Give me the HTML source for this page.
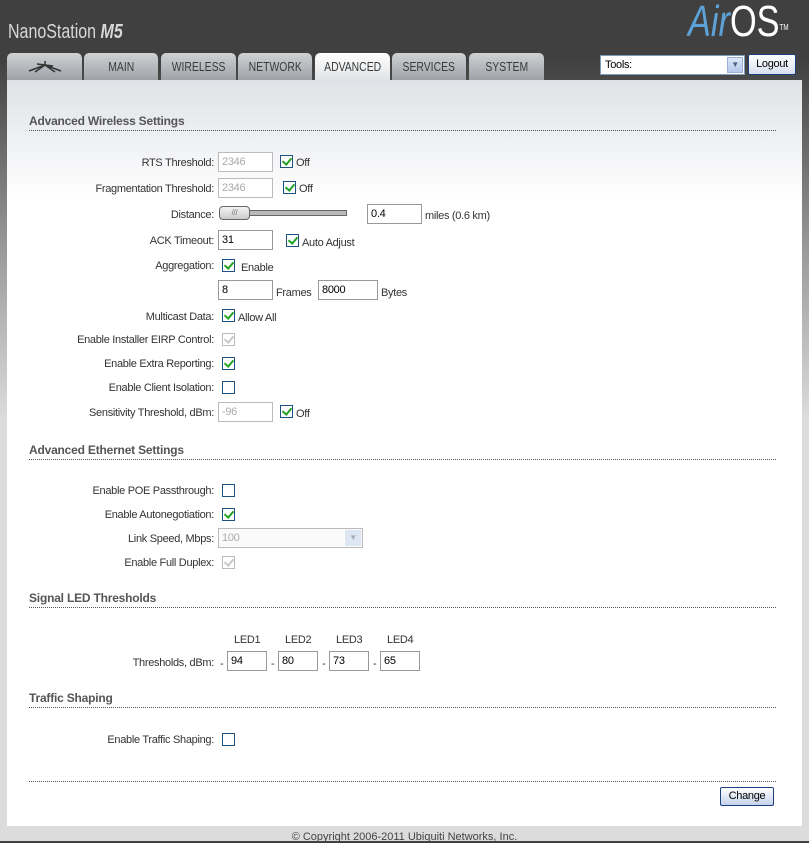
<!DOCTYPE html>
<html><head><meta charset="utf-8"><style>
*{margin:0;padding:0;box-sizing:border-box}
body{width:809px;height:841px;overflow:hidden;position:relative;font-family:"Liberation Sans",Arial,sans-serif;font-size:11px;letter-spacing:-0.3px;color:#333;background:linear-gradient(#404040 0px,#404040 60px,#9a9a9a 250px,#dcdcdc 420px,#dcdcdc 841px)}
.a{position:absolute;white-space:nowrap}
.tab{position:absolute;top:53px;height:27px;border-radius:5px 5px 0 0;background:linear-gradient(#cfd1d4,#9ea2a7);color:#3a3a3a;font-size:13px;text-align:center;line-height:28px;letter-spacing:0}
.tab span{display:inline-block;transform:scaleX(0.8)}
.tab.on{background:linear-gradient(#fff,#dfe2e6);height:28px}
#box{position:absolute;left:7px;top:80px;width:795px;height:746px;background:linear-gradient(#dfe2e6 0px,#fff 120px)}
.h{position:absolute;left:29px;width:747px;font-size:12px;font-weight:bold;color:#555;border-bottom:1px dotted #555;padding-bottom:2px;letter-spacing:-0.2px}
.l{position:absolute;right:595px;text-align:right;white-space:nowrap}
.in{position:absolute;height:20px;border:1px solid #999;background:#fff;padding:3px 3px;font-size:11px;color:#000}
.in.d{color:#aaa;border-color:#bbb}
.cb{position:absolute;width:13px;height:13px;border:1px solid #1c5180;background:#fff}
.cb.k::after{content:"";position:absolute;left:3px;top:0px;width:4px;height:7px;border:solid #21a121;border-width:0 2px 2px 0;transform:rotate(40deg)}
.cb.g{border-color:#bbb}.cb.g::after{border-color:#c8c8c8}
</style></head><body>
<div class="a" style="left:8px;top:21px;font-size:20px;color:#d8d8d8;letter-spacing:0;transform:scaleX(0.8);transform-origin:left">NanoStation <b style="font-style:italic">M5</b></div>
<div class="a" style="left:688px;top:-2px;font-size:44px;line-height:48px;letter-spacing:0;transform:scaleX(0.78);transform-origin:left"><i style="color:#5da3d8">Air</i><span style="color:#fff">OS</span><sup style="font-size:8px;color:#fff;vertical-align:top;position:relative;top:6px">TM</sup></div>
<div class="tab" style="left:7px;width:75px"><svg width="40" height="14" viewBox="0 0 40 14" style="margin-top:7px"><path d="M4 11 L20 5 L36 11 M20 5 L20 1 M12 4 L28 6 M20 5 L10 12 M20 5 L30 12" stroke="#333" stroke-width="1.5" fill="none"/></svg></div>
<div class="tab" style="left:84px;width:74px"><span>MAIN</span></div>
<div class="tab" style="left:161px;width:75px"><span>WIRELESS</span></div>
<div class="tab" style="left:238px;width:74px"><span>NETWORK</span></div>
<div class="tab on" style="left:315px;width:75px"><span>ADVANCED</span></div>
<div class="tab" style="left:392px;width:74px"><span>SERVICES</span></div>
<div class="tab" style="left:469px;width:75px"><span>SYSTEM</span></div>
<div class="a" style="left:600px;top:55px;width:145px;height:20px;background:#fff;border:1px solid #7f9db9;padding:3px 4px;color:#000">Tools:<span style="position:absolute;right:1px;top:1px;width:16px;height:16px;background:linear-gradient(#dde7f7,#b5c9ea);border:1px solid #98b0d8;font-size:8px;text-align:center;line-height:14px;color:#4d6185">&#9660;</span></div>
<div class="a" style="left:748px;top:54px;width:48px;height:21px;border:1px solid #1c3f80;border-radius:2px;background:linear-gradient(#fff,#d6e0f0);text-align:center;line-height:19px;color:#000">Logout</div>
<div id="box"></div>

<div class="h" style="top:114px">Advanced Wireless Settings</div>
<div class="l" style="top:157px">RTS Threshold:</div><div class="in d" style="left:218px;top:152px;width:55px">2346</div><div class="cb k" style="left:280px;top:155px"></div><div class="a" style="left:296px;top:157px">Off</div>
<div class="l" style="top:183px">Fragmentation Threshold:</div><div class="in d" style="left:218px;top:178px;width:55px">2346</div><div class="cb k" style="left:283px;top:181px"></div><div class="a" style="left:299px;top:183px">Off</div>
<div class="l" style="top:209px">Distance:</div>
<div class="a" style="left:249px;top:210px;width:98px;height:6px;background:#bbb;border:1px solid #666"></div>
<div class="a" style="left:219px;top:206px;width:31px;height:14px;border:1px solid #666;border-radius:4px;background:linear-gradient(#f4f4f4,#ccc);font-size:8px;color:#777;text-align:center;line-height:12px">///</div>
<div class="in" style="left:367px;top:204px;width:55px">0.4</div><div class="a" style="left:425px;top:210px">miles (0.6 km)</div>
<div class="l" style="top:235px">ACK Timeout:</div><div class="in" style="left:218px;top:230px;width:55px">31</div><div class="cb k" style="left:286px;top:234px"></div><div class="a" style="left:302px;top:237px">Auto Adjust</div>
<div class="l" style="top:260px">Aggregation:</div><div class="cb k" style="left:222px;top:259px"></div><div class="a" style="left:241px;top:262px">Enable</div>
<div class="in" style="left:218px;top:280px;width:55px">8</div><div class="a" style="left:276px;top:287px">Frames</div><div class="in" style="left:318px;top:280px;width:60px">8000</div><div class="a" style="left:381px;top:287px">Bytes</div>
<div class="l" style="top:311px">Multicast Data:</div><div class="cb k" style="left:222px;top:309px"></div><div class="a" style="left:238px;top:312px">Allow All</div>
<div class="l" style="top:334px">Enable Installer EIRP Control:</div><div class="cb k g" style="left:222px;top:333px"></div>
<div class="l" style="top:358px">Enable Extra Reporting:</div><div class="cb k" style="left:222px;top:357px"></div>
<div class="l" style="top:382px">Enable Client Isolation:</div><div class="cb" style="left:222px;top:381px"></div>
<div class="l" style="top:407px">Sensitivity Threshold, dBm:</div><div class="in d" style="left:218px;top:402px;width:55px">-96</div><div class="cb k" style="left:280px;top:405px"></div><div class="a" style="left:296px;top:408px">Off</div>

<div class="h" style="top:443px">Advanced Ethernet Settings</div>
<div class="l" style="top:485px">Enable POE Passthrough:</div><div class="cb" style="left:222px;top:484px"></div>
<div class="l" style="top:509px">Enable Autonegotiation:</div><div class="cb k" style="left:222px;top:508px"></div>
<div class="l" style="top:533px">Link Speed, Mbps:</div><div class="in d" style="left:218px;top:528px;width:145px;background:#fafafa">100<span style="position:absolute;right:1px;top:1px;width:16px;height:16px;background:#dde6f3;color:#aab;font-size:8px;text-align:center;line-height:16px">&#9660;</span></div>
<div class="l" style="top:557px">Enable Full Duplex:</div><div class="cb k g" style="left:222px;top:556px"></div>

<div class="h" style="top:591px">Signal LED Thresholds</div>
<div class="a" style="left:234px;top:634px">LED1</div><div class="a" style="left:285px;top:634px">LED2</div><div class="a" style="left:336px;top:634px">LED3</div><div class="a" style="left:387px;top:634px">LED4</div>
<div class="l" style="top:657px">Thresholds, dBm:</div>
<div class="a" style="left:220px;top:658px">-</div><div class="in" style="left:227px;top:651px;width:40px">94</div>
<div class="a" style="left:271px;top:658px">-</div><div class="in" style="left:278px;top:651px;width:40px">80</div>
<div class="a" style="left:322px;top:658px">-</div><div class="in" style="left:329px;top:651px;width:40px">73</div>
<div class="a" style="left:373px;top:658px">-</div><div class="in" style="left:380px;top:651px;width:40px">65</div>

<div class="h" style="top:691px">Traffic Shaping</div>
<div class="l" style="top:734px">Enable Traffic Shaping:</div><div class="cb" style="left:222px;top:733px"></div>

<div class="a" style="left:29px;top:781px;width:747px;border-top:1px dotted #555"></div>
<div class="a" style="left:720px;top:787px;width:54px;height:19px;border:1px solid #1c3f80;border-radius:2px;background:linear-gradient(#fff,#c4d2ea);text-align:center;line-height:17px;color:#000">Change</div>
<div class="a" style="left:0;width:809px;top:831px;text-align:center;color:#444;letter-spacing:0">© Copyright 2006-2011 Ubiquiti Networks, Inc.</div>
</body></html>
